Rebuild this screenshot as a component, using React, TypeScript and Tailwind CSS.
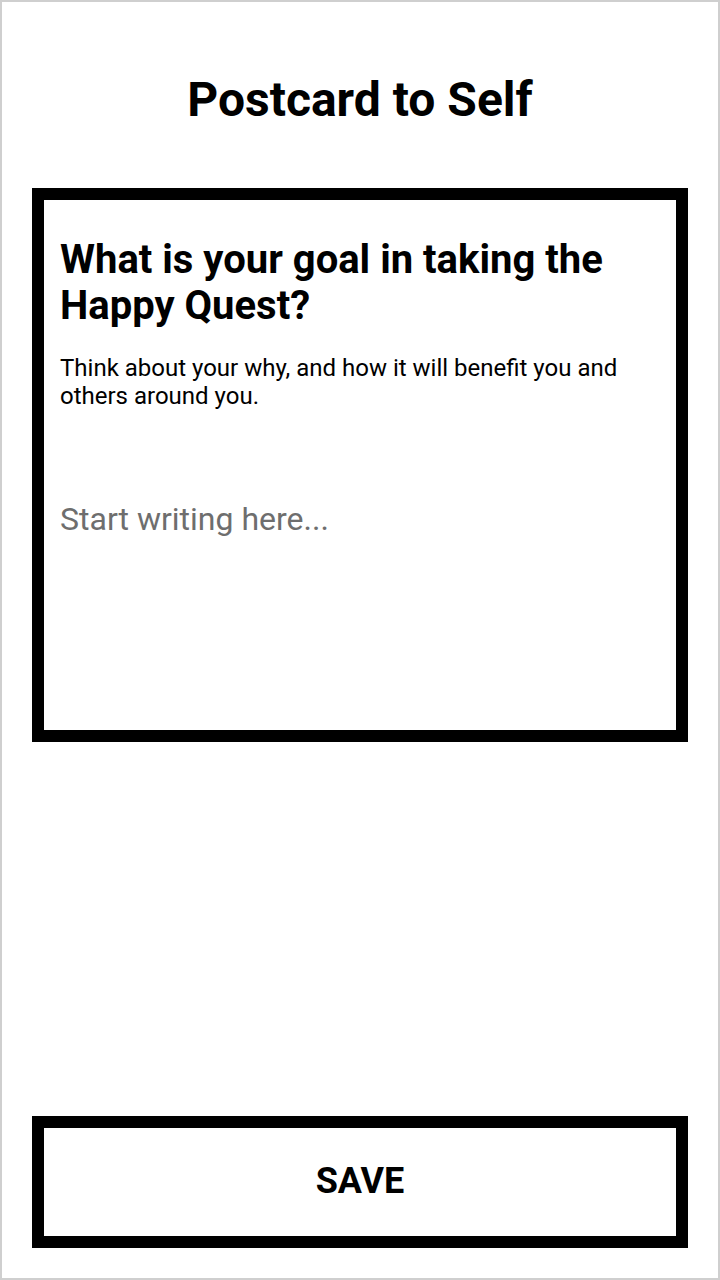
import { useState } from "react";

export default function App() {
  const [text, setText] = useState("");
  return (
    <div
      className="flex min-h-[1280px] w-[720px] flex-col border-2 border-[#cfcfcf] bg-white text-black"
      style={{ fontFamily: "Roboto, 'Noto Sans', sans-serif" }}
    >
      <h1 className="mt-[70px] text-center text-[48px] font-bold leading-[56px]">
        Postcard to Self
      </h1>
      <div className="mx-[30px] mt-[60px] flex h-[554px] flex-col border-[12px] border-black px-[16px] pt-[37px]">
        <h2 className="text-[40px] font-bold leading-[46px]">
          What is your goal in taking the Happy Quest?
        </h2>
        <p className="mt-[25px] text-[24px] leading-[28px]">
          Think about your why, and how it will benefit you and others around you.
        </p>
        <textarea
          value={text}
          onChange={(e) => setText(e.target.value)}
          placeholder="Start writing here..."
          className="mt-[89px] flex-1 resize-none bg-transparent text-[32px] leading-[40px] outline-none placeholder:text-[#6e6e6e]"
        />
      </div>
      <div className="flex-1" />
      <button className="mx-[30px] mb-[30px] h-[132px] border-[12px] border-black bg-white pb-[3px] text-[36px] font-bold">
        SAVE
      </button>
    </div>
  );
}
